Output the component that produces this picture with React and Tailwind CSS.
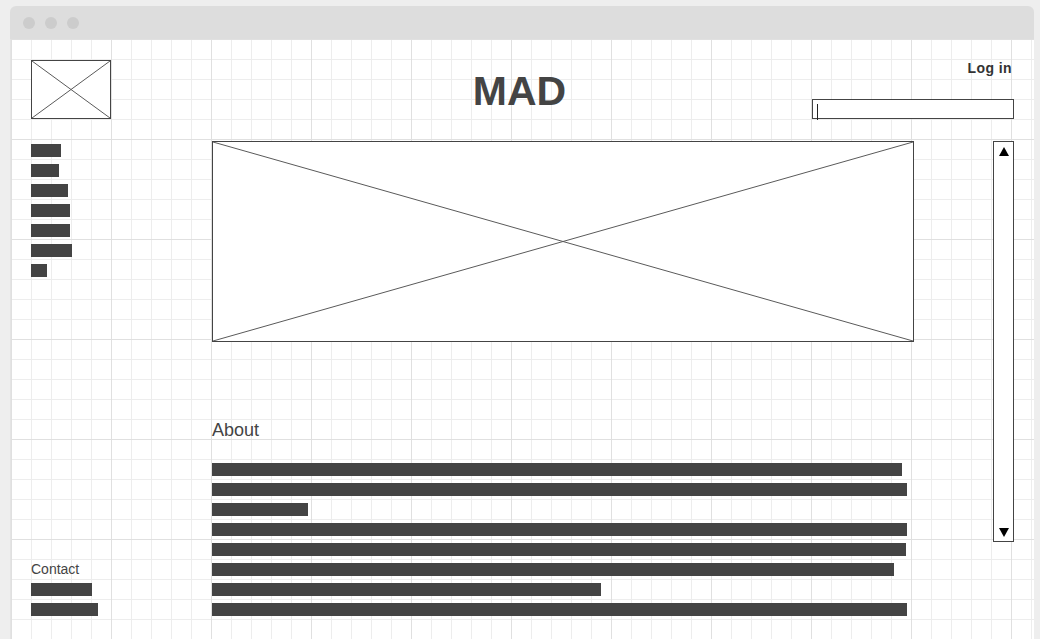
import React from "react";

const navBars = [30, 28, 37, 39, 39, 41, 16];
const aboutBars = [690, 695, 96, 695, 694, 682, 389, 695];
const contactBars = [61, 67];

const font = { fontFamily: '"Liberation Sans", Arial, sans-serif' };

// Placeholder box with an X through it (wireframe image)
const ImageBox = ({ className }) => (
  <div className={`relative bg-white border border-[#444444] ${className}`}>
    <svg className="absolute inset-0 w-full h-full" preserveAspectRatio="none" viewBox="0 0 100 100">
      <line x1="0" y1="0" x2="100" y2="100" stroke="#5a5a5a" strokeWidth="1" vectorEffect="non-scaling-stroke" />
      <line x1="100" y1="0" x2="0" y2="100" stroke="#5a5a5a" strokeWidth="1" vectorEffect="non-scaling-stroke" />
    </svg>
  </div>
);

const Bar = ({ w }) => <div className="h-[13px] bg-[#444444]" style={{ width: w }} />;

export default function App() {
  return (
    <div className="h-screen overflow-hidden bg-[#eeeeee] pt-[6px] pl-[10px]" style={font}>
      <div className="w-[1024px]">
        {/* title bar */}
        <div className="h-[33px] bg-[#dddddd] rounded-t-[6px] flex items-center gap-[10px] pl-[13px]">
          <span className="w-[12px] h-[12px] rounded-full bg-[#cccccc]" />
          <span className="w-[12px] h-[12px] rounded-full bg-[#cccccc]" />
          <span className="w-[12px] h-[12px] rounded-full bg-[#cccccc]" />
        </div>

        {/* page canvas */}
        <div className="h-[620px] bg-white border-l border-[#e4e4e4] px-[20px] pt-[21px] bg-[linear-gradient(to_right,#e0e0e0_1px,transparent_1px),linear-gradient(to_bottom,#e0e0e0_1px,transparent_1px),linear-gradient(to_right,#ededed_1px,transparent_1px),linear-gradient(to_bottom,#ededed_1px,transparent_1px)] bg-[size:100px_100px,100px_100px,20px_20px,20px_20px]">
          {/* header */}
          <div className="h-[81px] grid grid-cols-[1fr_auto_1fr]">
            <ImageBox className="w-[80px] h-[59px]" />
            <h1 className="mt-[7px] mr-[6px] text-[41px] leading-[48px] font-bold text-[#444444]">MAD</h1>
            <div className="flex flex-col items-end">
              <a className="text-[14px] leading-[16px] font-bold tracking-[0.4px] text-[#333333] mr-[2px]">Log in</a>
              <div className="relative mt-[23px] w-[202px] h-[20px] bg-white border border-[#444444]">
                <span className="absolute left-[4px] top-[4px] w-px h-[16px] bg-[#222222]" />
              </div>
            </div>
          </div>

          {/* body */}
          <div className="grid grid-cols-[181px_702px_1fr_21px]">
            <div className="flex flex-col">
              <div className="mt-[3px] flex flex-col gap-[7px]">
                {navBars.map((w, i) => (
                  <Bar key={i} w={w} />
                ))}
              </div>
              <div className="mt-auto">
                <p className="text-[14px] leading-[16px] text-[#444444]">Contact</p>
                <div className="mt-[6px] flex flex-col gap-[7px]">
                  {contactBars.map((w, i) => (
                    <Bar key={i} w={w} />
                  ))}
                </div>
              </div>
            </div>

            <div>
              <ImageBox className="w-[702px] h-[201px]" />
              <h2 className="mt-[77px] text-[18px] leading-[22px] text-[#444444]">About</h2>
              <div className="mt-[22px] flex flex-col gap-[7px]">
                {aboutBars.map((w, i) => (
                  <Bar key={i} w={w} />
                ))}
              </div>
            </div>

            <div />

            {/* scrollbar */}
            <div className="self-start h-[401px] bg-white border border-[#444444] flex flex-col items-center justify-between pt-[5px] pb-[4px]">
              <svg width="10" height="9" viewBox="0 0 10 9">
                <polygon points="5,0 10,9 0,9" fill="#000" />
              </svg>
              <svg width="10" height="9" viewBox="0 0 10 9">
                <polygon points="0,0 10,0 5,9" fill="#000" />
              </svg>
            </div>
          </div>
        </div>
      </div>
    </div>
  );
}
